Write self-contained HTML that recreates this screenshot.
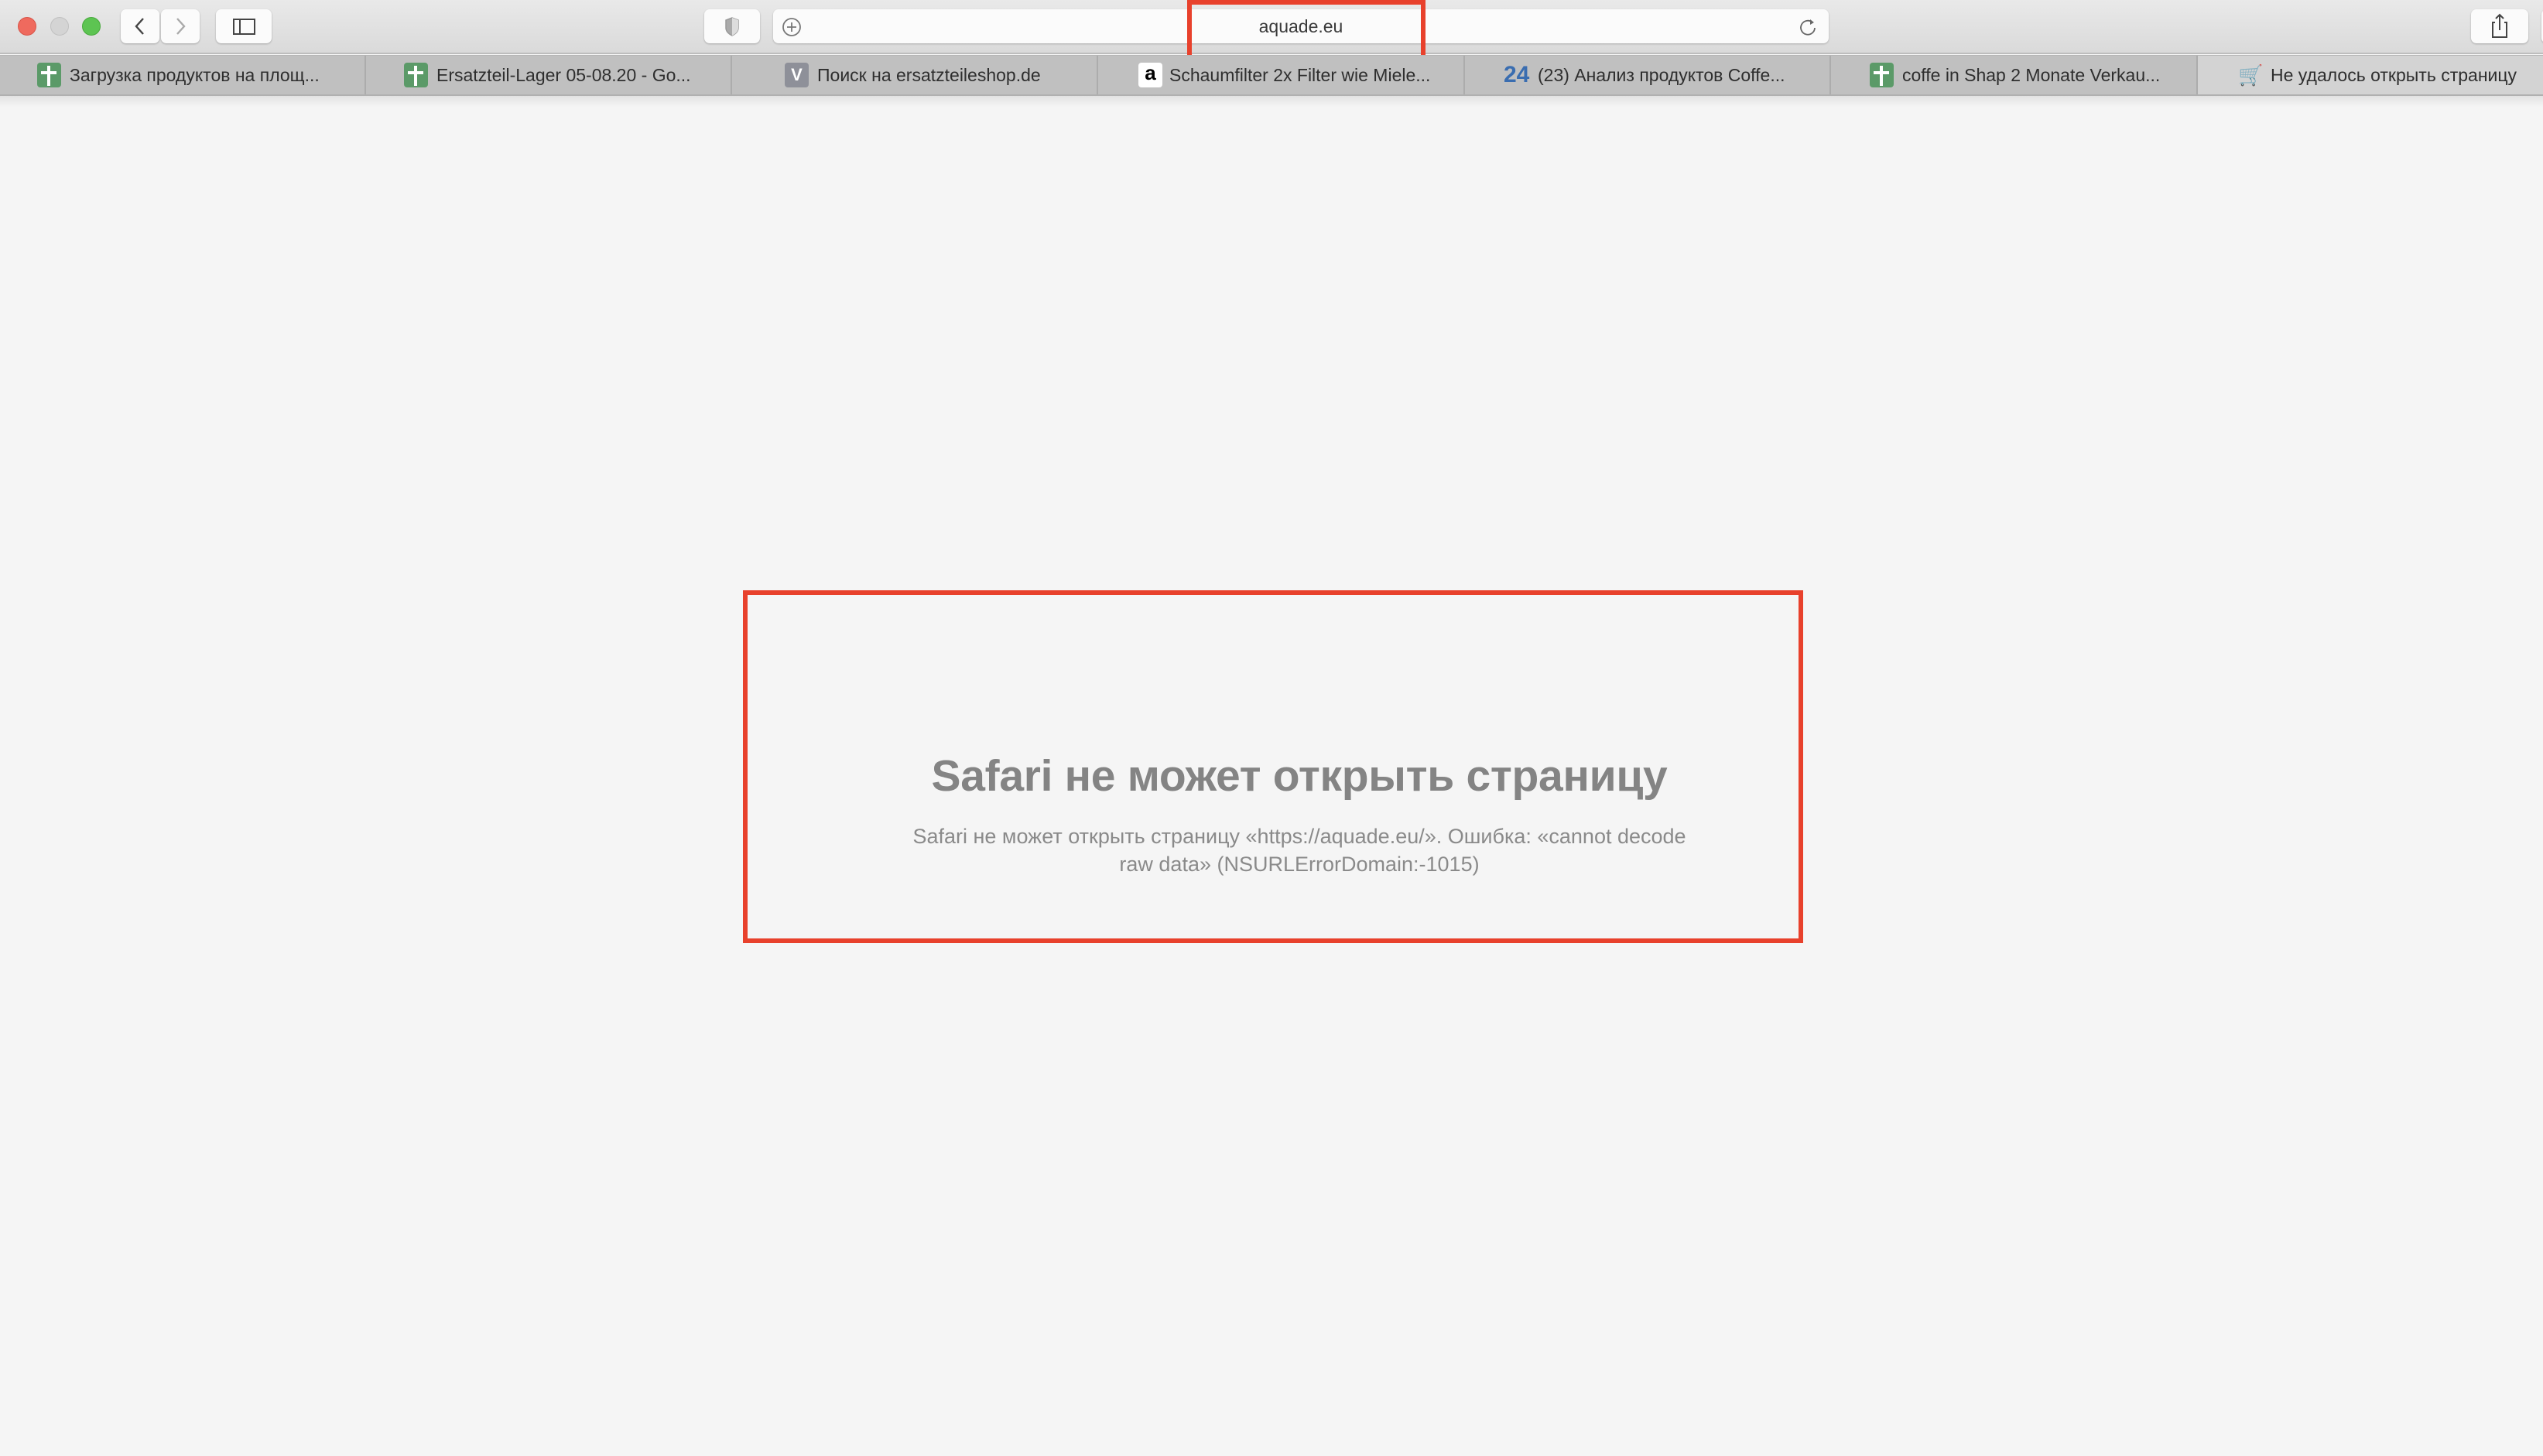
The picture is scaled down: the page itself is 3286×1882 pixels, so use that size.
<!DOCTYPE html>
<html><head><meta charset="utf-8"><style>
*{margin:0;padding:0;box-sizing:border-box}
html,body{width:3286px;height:1882px;overflow:hidden;background:#f5f5f5;font-family:"Liberation Sans","DejaVu Sans",sans-serif}
.tb{position:absolute;left:0;top:0;width:3286px;height:70px;background:linear-gradient(#e9e9e9,#dadada);border-bottom:2px solid #bdbdbd}
.dot{position:absolute;top:22px;width:24px;height:24px;border-radius:50%}
.btn{position:absolute;top:12px;height:44px;background:#fbfbfb;border-radius:7px;box-shadow:0 1px 2px rgba(0,0,0,.25)}
.url{position:absolute;left:999px;top:12px;width:1364px;height:44px;background:#fbfbfb;border-radius:7px;box-shadow:0 1px 2px rgba(0,0,0,.22);text-align:center;font-size:23px;line-height:44px;color:#3a3a3a}
.tabs{position:absolute;left:0;top:71px;width:3286px;height:53px;background:#c0c0c0;border-bottom:2px solid #b0b0b0;border-top:1px solid #b5b5b5}
.tab{position:absolute;top:0;height:50px;border-right:2px solid #acacac}
.ti{position:absolute;top:9px;width:31px;height:32px;border-radius:4px}
.tt{position:absolute;top:0;line-height:50px;font-size:23px;color:#2e2e2e;white-space:nowrap}
.g{background:#5b9a68}
.g:before{content:"";position:absolute;left:13px;top:4px;width:4px;height:26px;background:#fff}
.g:after{content:"";position:absolute;left:5px;top:11px;width:20px;height:4px;background:#fff}
.shadow{position:absolute;left:0;top:124px;width:3286px;height:14px;background:linear-gradient(rgba(0,0,0,.08),rgba(0,0,0,0))}
.box{position:absolute;left:960px;top:763px;width:1370px;height:456px;border:6px solid #e8412c}
.h{position:absolute;left:1179px;width:1000px;text-align:center;top:970px;font-size:57px;font-weight:bold;color:#848484;letter-spacing:-0.3px}
.p{position:absolute;left:1159px;width:1040px;text-align:center;top:1063px;font-size:27px;line-height:36px;color:#8a8a8a}
.red1{position:absolute;left:1534px;top:0;width:308px;height:97px;border:6px solid #e8412c}
</style></head><body>
<div class="tb">
 <div class="dot" style="left:23px;background:#ef6a5e;border:1px solid #d85448"></div>
 <div class="dot" style="left:65px;background:#d4d4d4;border:1px solid #c0c0c0"></div>
 <div class="dot" style="left:106px;background:#5dc452;border:1px solid #47a93c"></div>
 <div class="btn" style="left:156px;width:50px"><svg width="50" height="44"><path d="M29 12 L20 22 L29 32" fill="none" stroke="#444" stroke-width="2.4"/></svg></div>
 <div class="btn" style="left:208px;width:50px"><svg width="50" height="44"><path d="M21 12 L30 22 L21 32" fill="none" stroke="#aaa" stroke-width="2.4"/></svg></div>
 <div class="btn" style="left:279px;width:72px"><svg width="72" height="44"><rect x="23" y="13" width="27" height="19" fill="none" stroke="#444" stroke-width="2"/><line x1="31" y1="13" x2="31" y2="32" stroke="#444" stroke-width="2"/></svg></div>
 <div class="btn" style="left:910px;width:72px"><svg width="72" height="44"><path d="M36 11 L28 14 L28 24 Q28 30 36 34 Q44 30 44 24 L44 14 Z" fill="#aaa" stroke="#999" stroke-width="1.5"/><path d="M36 11 L44 14 L44 24 Q44 30 36 34Z" fill="#ddd"/></svg></div>
 <div class="url">aquade.eu
  <svg style="position:absolute;left:10px;top:9px" width="28" height="28"><circle cx="14" cy="14" r="11" fill="none" stroke="#777" stroke-width="1.8"/><path d="M14 8v12M8 14h12" stroke="#777" stroke-width="1.8"/></svg>
  <svg style="position:absolute;right:12px;top:9px" width="28" height="28"><path d="M19 8 A9 9 0 1 0 22 15" fill="none" stroke="#666" stroke-width="1.8"/><path d="M16 4 L21 8 L16 11" fill="#666"/></svg>
 </div>
 <div class="btn" style="left:3193px;width:74px"><svg width="74" height="44"><path d="M31 17 H28 V36 H46 V17 H43" fill="none" stroke="#444" stroke-width="2"/><path d="M37 7 V27 M32 12 L37 7 L42 12" fill="none" stroke="#444" stroke-width="2"/></svg></div>
 <div class="btn" style="left:3284px;width:20px"></div>
</div>
<div class="red1"></div>
<div class="tabs">
 <div class="tab" style="left:0;width:473px"><div class="ti g" style="left:48px"></div><div class="tt" style="left:90px">Загрузка продуктов на площ...</div></div>
 <div class="tab" style="left:473px;width:473px"><div class="ti g" style="left:49px"></div><div class="tt" style="left:91px">Ersatzteil-Lager 05-08.20 - Go...</div></div>
 <div class="tab" style="left:946px;width:473px"><div class="ti" style="left:68px;background:#8e9099;color:#fff;font-size:22px;font-weight:bold;text-align:center;line-height:32px">V</div><div class="tt" style="left:110px">Поиск на ersatzteileshop.de</div></div>
 <div class="tab" style="left:1419px;width:474px"><div class="ti" style="left:52px;background:#fff;color:#000;font-size:26px;font-weight:bold;text-align:center;line-height:26px">a</div><div class="tt" style="left:92px">Schaumfilter 2x Filter wie Miele...</div></div>
 <div class="tab" style="left:1893px;width:473px"><div class="ti" style="left:50px;color:#3a6db0;font-size:30px;font-weight:bold;line-height:32px;width:40px">24</div><div class="tt" style="left:94px">(23) Анализ продуктов Coffe...</div></div>
 <div class="tab" style="left:2366px;width:474px"><div class="ti g" style="left:50px"></div><div class="tt" style="left:92px">coffe in Shap 2 Monate Verkau...</div></div>
 <div class="tab" style="left:2840px;width:446px;background:#d3d3d3;border:none"><div class="ti" style="left:52px;color:#888;font-size:26px;line-height:32px">🛒</div><div class="tt" style="left:94px">Не удалось открыть страницу</div></div>
</div>
<div class="shadow"></div>
<div class="box"></div>
<div class="h">Safari не может открыть страницу</div>
<div class="p">Safari не может открыть страницу «https://aquade.eu/». Ошибка: «cannot decode raw data» (NSURLErrorDomain:-1015)</div>
</body></html>
